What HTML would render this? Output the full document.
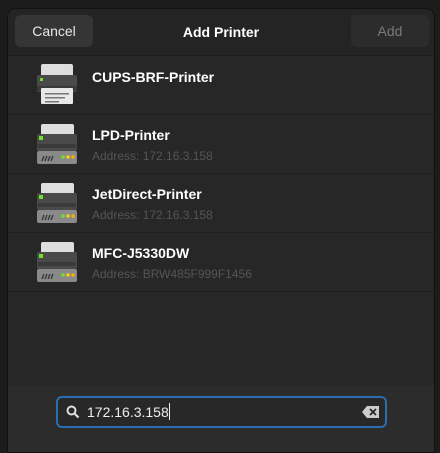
<!DOCTYPE html>
<html><head><style>
body{margin:0;width:440px;height:448px;background:#1c1c1c;font-family:"Liberation Sans",sans-serif;overflow:hidden;position:relative}
.win{position:absolute;left:7px;top:8px;width:428px;height:445px;background:#272727;border-radius:9px 9px 0 0;border:1px solid #111;box-sizing:border-box;overflow:hidden}
.hdr{position:absolute;left:0;top:0;right:0;height:46px;background:#242424;border-bottom:1px solid #1b1b1b}
.btn{position:absolute;top:6px;height:32px;width:78px;border-radius:6px;background:#353535;color:#e8e8e8;font-size:14px;line-height:32px;text-align:center}
.title{position:absolute;left:0;right:0;top:0;line-height:46px;text-align:center;color:#fff;font-weight:bold;font-size:14px}
.row{position:absolute;left:0;right:0;height:58px;border-bottom:1px solid #1f1f1f}
.nm{position:absolute;left:84px;color:#fff;font-weight:bold;font-size:14px}
.ad{position:absolute;left:84px;color:#555;font-size:12px}
.ic{position:absolute;left:29px}
.bot{position:absolute;left:0;right:0;top:377px;bottom:0;background:#2c2c2c}
.search{position:absolute;left:48px;top:10px;width:331px;height:32px;box-sizing:border-box;border:2px solid #2d6cb0;border-radius:6px;background:#282828}
</style></head><body>
<div class="win">
 <div class="hdr">
  <div class="btn" style="left:7px">Cancel</div>
  <div class="title">Add Printer</div>
  <div class="btn" style="left:343px;color:#7a7a7a;background:#2c2c2c">Add</div>
 </div>
 <div class="row" style="top:47px">
  <svg class="ic" style="top:8px" width="40" height="42"><rect x="4" y="0" width="32" height="14" rx="2" fill="#dedede"/><rect x="0" y="11" width="40" height="17" rx="2" fill="#4a4a4a"/><rect x="0" y="22" width="40" height="5" fill="#3a3a3a"/><rect x="3" y="14" width="3" height="3" fill="#6ee22a"/><rect x="4" y="24" width="32" height="16" rx="1" fill="#e8e8e8"/><rect x="8" y="29" width="24" height="1.5" fill="#777"/><rect x="8" y="33" width="20" height="1.5" fill="#777"/><rect x="8" y="37" width="14" height="1.5" fill="#777"/></svg>
  <div class="nm" style="top:13px">CUPS-BRF-Printer</div>
 </div>
 <div class="row" style="top:106px">
  <svg class="ic" style="top:9px" width="40" height="41"><rect x="4" y="0" width="33" height="12" rx="2" fill="#dedede"/><rect x="0" y="10" width="40" height="17" rx="2" fill="#4a4a4a"/><rect x="1" y="20" width="38" height="4" fill="#3a3a3a"/><rect x="2" y="12" width="4" height="4" fill="#6ee22a"/><rect x="0" y="27" width="40" height="13" rx="2" fill="#8a8a8a"/><path d="M5 37l2-5M8 37l2-5M11 37l2-5M14 37l2-5" stroke="#333" stroke-width="1.3"/><circle cx="26" cy="33" r="1.7" fill="#6ee22a"/><circle cx="31" cy="33" r="1.7" fill="#f5d200"/><circle cx="36" cy="33" r="1.7" fill="#f5b400"/></svg>
  <div class="nm" style="top:12px">LPD-Printer</div><div class="ad" style="top:34px">Address: 172.16.3.158</div>
 </div>
 <div class="row" style="top:165px">
  <svg class="ic" style="top:9px" width="40" height="41"><rect x="4" y="0" width="33" height="12" rx="2" fill="#dedede"/><rect x="0" y="10" width="40" height="17" rx="2" fill="#4a4a4a"/><rect x="1" y="20" width="38" height="4" fill="#3a3a3a"/><rect x="2" y="12" width="4" height="4" fill="#6ee22a"/><rect x="0" y="27" width="40" height="13" rx="2" fill="#8a8a8a"/><path d="M5 37l2-5M8 37l2-5M11 37l2-5M14 37l2-5" stroke="#333" stroke-width="1.3"/><circle cx="26" cy="33" r="1.7" fill="#6ee22a"/><circle cx="31" cy="33" r="1.7" fill="#f5d200"/><circle cx="36" cy="33" r="1.7" fill="#f5b400"/></svg>
  <div class="nm" style="top:12px">JetDirect-Printer</div><div class="ad" style="top:34px">Address: 172.16.3.158</div>
 </div>
 <div class="row" style="top:224px">
  <svg class="ic" style="top:9px" width="40" height="41"><rect x="4" y="0" width="33" height="12" rx="2" fill="#dedede"/><rect x="0" y="10" width="40" height="17" rx="2" fill="#4a4a4a"/><rect x="1" y="20" width="38" height="4" fill="#3a3a3a"/><rect x="2" y="12" width="4" height="4" fill="#6ee22a"/><rect x="0" y="27" width="40" height="13" rx="2" fill="#8a8a8a"/><path d="M5 37l2-5M8 37l2-5M11 37l2-5M14 37l2-5" stroke="#333" stroke-width="1.3"/><circle cx="26" cy="33" r="1.7" fill="#6ee22a"/><circle cx="31" cy="33" r="1.7" fill="#f5d200"/><circle cx="36" cy="33" r="1.7" fill="#f5b400"/></svg>
  <div class="nm" style="top:12px">MFC-J5330DW</div><div class="ad" style="top:34px">Address: BRW485F999F1456</div>
 </div>
 <div class="bot">
  <div class="search">
   <svg style="position:absolute;left:8px;top:7px" width="14" height="14"><circle cx="5.5" cy="5.5" r="4" stroke="#ddd" stroke-width="2" fill="none"/><path d="M8.5 8.5l4 4" stroke="#ddd" stroke-width="2.2"/></svg>
   <div style="position:absolute;left:29px;top:0;line-height:28px;color:#eee;font-size:14px">172.16.3.158<span style="display:inline-block;width:1px;height:17px;background:#eee;vertical-align:-3px"></span></div>
   <svg style="position:absolute;left:304px;top:8px" width="17" height="12"><path d="M5 0h12v12H5L0 6z" fill="#ccc"/><path d="M8 3l6 6M14 3l-6 6" stroke="#282828" stroke-width="1.8"/></svg>
  </div>
 </div>
</div>
</body></html>
